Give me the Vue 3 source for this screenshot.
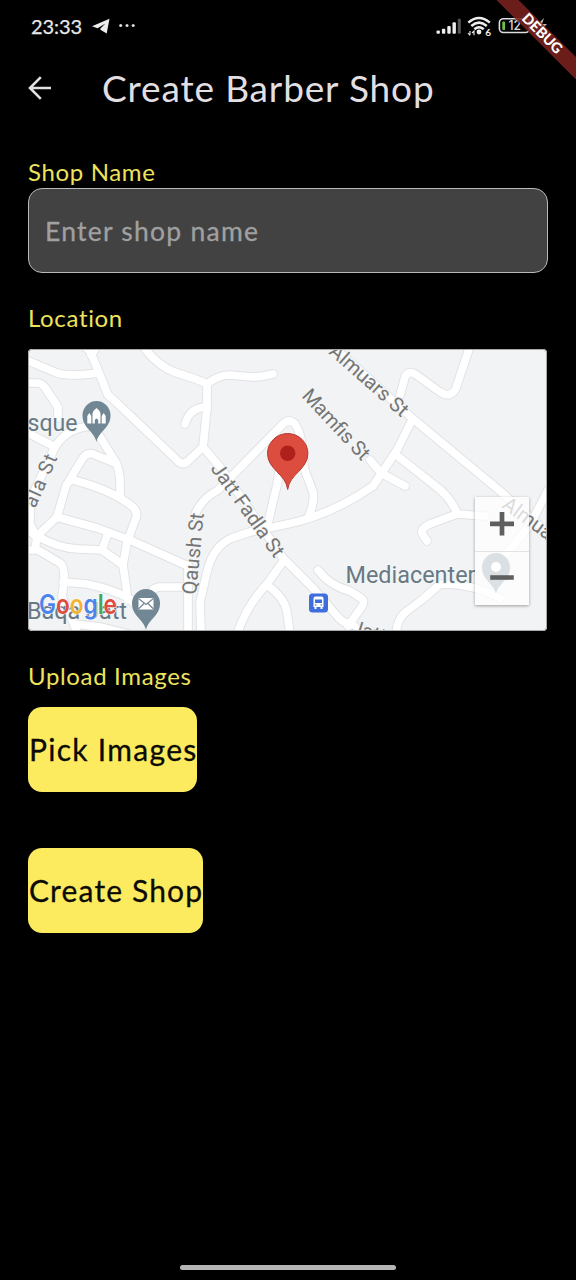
<script setup>
const roads = [
  'M26 360 L57 373 Q70 377 98 373',
  'M84 345 L91 353 L108 395 L117 403 L178 461 Q183 466 188 461 L203 447 L207 408 V385',
  'M98 345 L91 355',
  'M143 346 Q157 366 177 373 Q200 380 207 384 Q218 375 230 375 L253 377 Q262 377 273 374',
  'M207 407 Q190 407 185 424',
  'M26 383 H38 Q42 383 46 389 L58 407 V418',
  'M26 432 L55 447 Q66 430 84 427 L97 425',
  'M55 447 L48 462 L30 500 V524 L37 538',
  'M97 432 L115 461 Q121 470 120 495',
  'M115 463 L93 454 Q86 452 81 461 L66 486 L57 517 L37 536',
  'M73 480 Q112 490 133 507 Q138 512 136 518 L127 542 L123 565 L128 600',
  'M57 517 L97 528 L130 540 L188 566',
  'M37 536 Q60 549 79 549 L102 550 L123 565',
  'M108 533 L102 550',
  'M26 527 L37 538 L35 549',
  'M26 550 H38 L60 563 Q65 567 64 582 L62 597 L70 615 L78 634',
  'M63 582 L87 584 Q115 590 130 599 L145 615',
  'M74 624 L100 627 L128 634',
  'M145 600 Q152 587 160 587 H188',
  'M188 565 V634',
  'M201 634 L200 602 L207 572 Q213 546 232 538 L250 532 L283 525 Q330 516 373 486 L397 450 L412 420',
  'M400 395 L405 377 Q408 370 415 374 L440 392 Q451 399 456 388 L470 346',
  'M335 348 L412 418 L500 491 L550 535',
  'M370 460 L381 473 L405 486',
  'M395 454 L433 484 Q450 496 457 513',
  'M485 516 L457 514 L430 524 Q419 529 423 535 L427 541',
  'M396 634 Q397 618 407 611 L423 599 L440 584 Q475 584 500 598',
  'M548 490 L530 525 L500 562',
  'M195 515 Q200 500 218 490 L283 424 Q289 418 295 424 Q303 435 304 468 L313 492 Q315 502 308 518',
  'M282 455 L277 485 L267 527',
  'M203 447 L220 467 L283 558 L313 588 L338 617 Q344 624 352 624 L380 650',
  'M282 563 L267 584 Q247 605 237 634',
  'M267 585 Q285 598 287 612 L290 634',
  'M318 570 Q330 586 350 591 L361 598 Q366 601 361 608 L348 626'
]
</script>

<template>
  <div class="screen">
    <header class="status">
      <span class="clock">23:33</span>
      <svg class="notif" width="46" height="24" viewBox="92 14 46 24">
        <path d="M92 26.2 L109.5 18.8 L106.7 33.5 L101.2 30.3 L100 29 L105.4 23.4 L97.6 28.2Z" fill="#eee" />
        <g fill="#ddd"><circle cx="120.7" cy="25.4" r="1.5" /><circle cx="127" cy="25.4" r="1.5" /><circle cx="133.2" cy="25.4" r="1.5" /></g>
      </svg>
      <svg class="system" width="112" height="26" viewBox="436 13 112 26">
        <g fill="#eee">
          <rect x="436.5" y="30.5" width="3.4" height="3.3" rx="1" />
          <rect x="441.9" y="28.8" width="3.4" height="5" rx="1" />
          <rect x="447.3" y="26" width="3.4" height="7.8" rx="1" />
          <rect x="452.5" y="22.3" width="3.4" height="11.5" rx="1" />
          <rect x="457.8" y="18.7" width="3" height="15.1" rx="1" fill="#555" />
          <circle cx="479" cy="32" r="2.4" />
        </g>
        <g fill="none" stroke="#eee" stroke-width="2.5">
          <path d="M468.3 22.6 Q479 13.4 489.8 22.6" />
          <path d="M471.3 26 Q479 19.3 486.8 26" />
          <path d="M474.4 29.3 Q479 25.3 483.7 29.3" />
          <path d="M470 31 V35 M468 33 L470 35.3 M474 35.3 V31 L472 33" stroke-width="1.1" />
        </g>
        <text x="485.3" y="35.5" class="wifi6">6</text>
        <rect x="499.4" y="18.7" width="30" height="13.8" rx="4" fill="none" stroke="#ddd" stroke-width="1.6" />
        <rect x="502.3" y="21.5" width="2.8" height="8.5" rx="1" fill="#6ec04a" />
        <text x="508.6" y="30" textLength="12.500" lengthAdjust="spacingAndGlyphs" class="level">12</text>
        <path d="M544 18 L536 26 H541 L538 33 L547 24 H542Z" fill="#bbb" />
      </svg>
    </header>
    <svg class="ribbon" width="90" height="90" viewBox="486 0 90 90">
      <path d="M496.5 0 H518.5 L576 57 V79.5Z" fill="#7a211e" fill-opacity=".88" />
      <text transform="translate(542.3 33.5) rotate(45)" y="5" text-anchor="middle" textLength="50">DEBUG</text>
    </svg>

    <div class="appbar">
      <svg width="24" height="24" viewBox="28 76 24 24" fill="none" stroke="#e2dfe3" stroke-width="2.6">
        <path d="M51 88 H30.5 M40.8 77.2 L30 88 L40.8 98.8" />
      </svg>
      <h1>Create Barber Shop</h1>
    </div>

    <main>
      <label class="lbl name">Shop Name</label>
      <div class="field"><span>Enter shop name</span></div>
      <label class="lbl loc">Location</label>

      <div class="map">
        <svg width="519" height="282" viewBox="28 349 519 282">
          <g fill="none" stroke="#e0e2e5" stroke-width="9.6" stroke-linecap="round" stroke-linejoin="round">
            <path v-for="(d, i) in roads" :key="'o' + i" :d="d" />
          </g>
          <g fill="none" stroke="#fff" stroke-width="7.700" stroke-linecap="round" stroke-linejoin="round">
            <path v-for="(d, i) in roads" :key="'r' + i" :d="d" />
          </g>
          <g class="street">
            <text transform="translate(328 353) rotate(41.5)" textLength="98">Almuars St</text>
            <text transform="translate(301 396.500) rotate(47)" textLength="89">Mamfis St</text>
            <text transform="translate(210 468.500) rotate(54.5)" textLength="111">Jatt Fadla St</text>
            <text transform="translate(196 595) rotate(-84.5)" textLength="82">Qaush St</text>
            <text transform="translate(35 509) rotate(-66)" textLength="56">ala St</text>
            <text transform="translate(501 507) rotate(36)">Almuars St</text>
            <text transform="translate(350 633) rotate(17)">Jatt</text>
          </g>
          <g class="place">
            <text x="27.5" y="431" textLength="50" lengthAdjust="spacingAndGlyphs">sque</text>
            <text x="345.5" y="583" textLength="130" lengthAdjust="spacingAndGlyphs">Mediacenter</text>
            <text x="27" y="618.500" textLength="100" lengthAdjust="spacingAndGlyphs">Baqa Jatt</text>
          </g>
          <g fill="#728794">
            <path d="M96.5 442 C94 431 82.5 428 82.5 415.5 A14 14.5 0 0 1 110.5 415.5 C110.5 428 99 431 96.5 442Z" />
            <path d="M146 630 C143.500 619 132 616 132 603.500 A14 14.500 0 0 1 160 603.500 C160 616 148.500 619 146 630Z" />
            <path d="M496 594 C493.500 583 482 580 482 567.500 A14 14.500 0 0 1 510 567.500 C510 580 498.500 583 496 594Z" />
          </g>
          <path d="M87.300 423.500 V416 L89.300 413 L91.300 416 V423.500Z M92.500 423.500 V413.500 Q93 410.500 96.500 408 Q100 410.500 100.500 413.500 V423.500 H98.200 V420 Q96.500 417 94.800 420 V423.500Z M101.700 423.500 V416 L103.700 413 L105.700 416 V423.500Z" fill="#fff" />
          <rect x="138.500" y="598" width="15" height="11.500" fill="#fff" />
          <path d="M138.500 598.500 L146 604.500 L153.500 598.500 M138.500 609 L144 603.500 M153.500 609 L148 603.500" fill="none" stroke="#728794" stroke-width="1.200" />
          <circle cx="496" cy="567" r="5" fill="#fff" />
          <g>
            <rect x="309" y="593.500" width="19" height="19" rx="3.500" fill="#3f6fdc" />
            <path d="M313.500 598.500 Q313.500 596.500 315.500 596.500 H321.500 Q323.500 596.500 323.500 598.500 V607 H322.500 V609 H320.500 V607 H316.500 V609 H314.500 V607 H313.500Z" fill="#fff" />
            <path d="M315 599.500 H322 V603 H315Z" fill="#3f6fdc" />
            <circle cx="315.700" cy="605" r=".8" fill="#3f6fdc" /><circle cx="321.300" cy="605" r=".8" fill="#3f6fdc" />
          </g>
          <path d="M287.700 489.500 C286 474 267.500 469.500 267.500 453.500 A20.200 20 0 0 1 307.900 453.500 C307.900 469.500 289.400 474 287.700 489.500Z" fill="#dc4c3f" stroke="#b8392f" stroke-width="1" />
          <circle cx="287.700" cy="453.300" r="7.700" fill="#ae211b" />
          <text class="google" x="39" y="613.500" textLength="78" lengthAdjust="spacingAndGlyphs"><tspan fill="#4c84ee">G</tspan><tspan fill="#df4c40">o</tspan><tspan fill="#f3b52f">o</tspan><tspan fill="#4c84ee">g</tspan><tspan fill="#43a45a">l</tspan><tspan fill="#df4c40">e</tspan></text>
        </svg>
        <div class="zoom">
          <svg width="54" height="54" viewBox="0 0 54 54"><path d="M27 15 V38.500 M15 26.800 H39" /></svg>
          <svg width="54" height="54" viewBox="0 0 54 54"><path d="M15 26 H39" /></svg>
        </div>
      </div>

      <label class="lbl up">Upload Images</label>
      <button class="btn pick">Pick Images</button>
      <button class="btn create">Create Shop</button>
    </main>
    <div class="homebar"></div>
  </div>
</template>

<style>
body { background: #000; }
</style>

<style scoped>
.screen {
  position: relative;
  display: flex;
  flex-direction: column;
  width: 576px;
  height: 1280px;
  overflow: hidden;
  background: #000;
  font-family: Lato, "Open Sans", sans-serif;
}
.status { display: flex; align-items: center; height: 52px; padding: 0 28px 0 31px; box-sizing: border-box; }
.clock { width: 61px; color: #e8e8e8; font-size: 20px; letter-spacing: -.1px; white-space: nowrap; -webkit-text-stroke: .25px #e8e8e8; }
.system { margin-left: auto; }
.wifi6 { font: bold 10px Lato, sans-serif; fill: #eee; }
.level { font: 500 12.500px Inter, sans-serif; fill: #ddd; }
.ribbon { position: absolute; right: 0; top: 0; }
.ribbon text { font: 900 14.500px Lato, sans-serif; fill: #fff; }
.appbar { display: flex; align-items: center; height: 72px; padding-left: 28px; }
h1 { margin: 0 0 0 50px; color: #e2dfe3; font-size: 37px; font-weight: 400; line-height: 48px; letter-spacing: .85px; white-space: nowrap; }
main { display: flex; flex-direction: column; align-items: flex-start; padding: 33px 28px 0; }
.lbl { display: block; height: 30px; color: #eee35c; font-size: 24px; line-height: 30px; letter-spacing: .65px; white-space: nowrap; }
.field {
  display: flex;
  align-items: center;
  box-sizing: border-box;
  width: 520px;
  height: 85px;
  margin-top: 1px;
  padding-left: 16px;
  border: 1.500px solid #b9b9b9;
  border-radius: 14px;
  background: #424242;
}
.field span { color: #a0a0a0; font-size: 26.500px; letter-spacing: 1.250px; -webkit-text-stroke: .3px #a0a0a0; }
.loc { margin-top: 30px; }
.map { position: relative; width: 519px; height: 282px; margin-top: 16px; overflow: hidden; border-radius: 4px; background: #f1f3f5; }
.map > svg { display: block; }
.map::after { content: ""; position: absolute; inset: 0; border: 1px solid #aaa; border-radius: 4px; pointer-events: none; }
.street { font: 20px Roboto, sans-serif; fill: #757575; stroke: #f4f5f6; stroke-width: 2px; paint-order: stroke; }
.place { font: 23.500px Roboto, sans-serif; fill: #677984; stroke: #f4f5f6; stroke-width: 2px; paint-order: stroke; }
.google { font: 600 26.500px Inter, sans-serif; stroke: #fff; stroke-width: 1px; paint-order: stroke; }
.zoom { position: absolute; left: 447px; top: 148px; display: flex; flex-direction: column; width: 54px; height: 108px; background: rgba(255, 255, 255, .74); box-shadow: 0 1px 3px rgba(0, 0, 0, .35); }
.zoom svg { display: block; fill: none; stroke: #5f5f5f; stroke-width: 4.700; }
.zoom svg + svg { border-top: 1px solid #e3e3e3; box-sizing: border-box; }
.up { margin-top: 30px; }
.btn {
  height: 85px;
  padding: 0 0 2px;
  border: 0;
  border-radius: 14px;
  background: #fceb5f;
  color: #0c0a05;
  font: 400 30px Lato, sans-serif;
  letter-spacing: 1.300px;
  text-indent: 1px;
  white-space: nowrap;
  -webkit-text-stroke: .3px #0c0a05;
}
.pick { width: 169px; margin-top: 16px; }
.create { width: 175px; margin-top: 56px; letter-spacing: 1.150px; }
.homebar { position: absolute; left: 180px; bottom: 10px; width: 216px; height: 5px; border-radius: 3px; background: #b5b5b5; }
</style>
